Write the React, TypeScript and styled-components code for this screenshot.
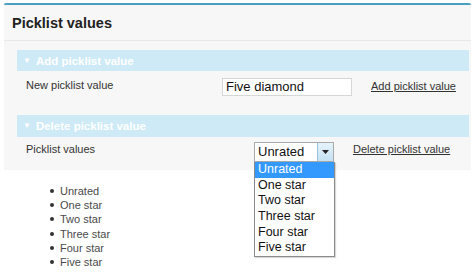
import React from "react";
import styled, { createGlobalStyle } from "styled-components";

const Global = createGlobalStyle`
  html, body {
    margin: 0;
    padding: 0;
    background: #fff;
    font-family: "Liberation Sans", Arial, sans-serif;
    color: #3a3a3a;
  }
`;

const Page = styled.div`
  width: 474px;
  height: 275px;
  padding: 3px 3px 0 4px;
  box-sizing: border-box;
  overflow: hidden;
`;

const Panel = styled.div`
  background: #f7f7f7;
  border-top: 2px solid #4a9fc0;
  border-radius: 2px 2px 0 0;
  height: 167px;
  box-sizing: border-box;
  padding-bottom: 1px;
`;

const Header = styled.div`
  height: 36px;
  display: flex;
  align-items: center;
  padding-left: 8px;
  font-size: 14.5px;
  font-weight: bold;
  color: #222;
  border-bottom: 1px solid #e8e8e8;
  box-sizing: border-box;
`;

const Body = styled.div`
  padding: 9px 2px 0 13px;
`;

const SectionBar = styled.div<{ $h: number }>`
  height: ${(p) => p.$h}px;
  background: #cdeaf6;
  display: flex;
  align-items: center;
  padding-left: 6px;
  gap: 5px;
  color: #fff;
  font-size: 11.5px;
  font-weight: bold;
`;

const Arrow = styled.span`
  font-size: 8px;
  line-height: 1;
`;

const Row = styled.div<{ $h: number }>`
  height: ${(p) => p.$h}px;
  display: flex;
  align-items: flex-start;
  padding-left: 9px;
  font-size: 11px;
  color: #333;
`;

const Label = styled.div<{ $w: number; $top: number }>`
  width: ${(p) => p.$w}px;
  margin-top: ${(p) => p.$top}px;
`;

const TextInput = styled.div`
  width: 130px;
  height: 18px;
  margin-top: 7px;
  background: #fff;
  border: 1px solid #d6d6d6;
  box-sizing: border-box;
  font-size: 13px;
  color: #111;
  padding-left: 3px;
  line-height: 16px;
`;

const LinkText = styled.span<{ $left: number; $top: number }>`
  margin-left: ${(p) => p.$left}px;
  margin-top: ${(p) => p.$top}px;
  text-decoration: underline;
  color: #333;
`;

const SelectWrap = styled.div`
  position: relative;
  margin-top: 5px;
`;

const SelectBox = styled.div`
  width: 80px;
  height: 20px;
  background: #fff;
  border: 1px solid #a9a9a9;
  box-sizing: border-box;
  display: flex;
  font-size: 13px;
  color: #111;
`;

const SelectValue = styled.div`
  flex: 1;
  padding-left: 3px;
  line-height: 18px;
`;

const SelectButton = styled.div`
  width: 15px;
  background: linear-gradient(#e6f3fb, #c4e1f3);
  border-left: 1px solid #9dc3dc;
  display: flex;
  align-items: center;
  justify-content: center;
`;

const List = styled.div`
  position: absolute;
  top: 20px;
  left: 0;
  width: 81px;
  background: #fff;
  border: 1px solid #8a8a8a;
  border-top: none;
  box-sizing: border-box;
  box-shadow: 1px 1px 1px rgba(0, 0, 0, 0.15);
  z-index: 2;
`;

const Option = styled.div<{ $active?: boolean }>`
  height: 15.7px;
  line-height: 15.7px;
  padding-left: 3px;
  font-size: 12.5px;
  background: ${(p) => (p.$active ? "#3399ff" : "#fff")};
  color: ${(p) => (p.$active ? "#fff" : "#111")};
`;

const Bullets = styled.ul`
  margin: 14px 0 0 0;
  padding-left: 56px;
  list-style: none;
  font-size: 11px;
  line-height: 14.2px;
  color: #4a4a4a;
`;

const Item = styled.li`
  position: relative;
  &::before {
    content: "";
    position: absolute;
    left: -10px;
    top: 5px;
    width: 4px;
    height: 4px;
    border-radius: 50%;
    background: #333;
  }
`;

const options = ["Unrated", "One star", "Two star", "Three star", "Four star", "Five star"];

export default function App() {
  return (
    <Page>
      <Global />
      <Panel>
        <Header>Picklist values</Header>
        <Body>
          <SectionBar $h={21}>
            <Arrow>▼</Arrow>
            Add picklist value
          </SectionBar>
          <Row $h={44}>
            <Label $w={196} $top={8}>New picklist value</Label>
            <TextInput>Five diamond</TextInput>
            <LinkText $left={19} $top={9}>Add picklist value</LinkText>
          </Row>
          <SectionBar $h={22}>
            <Arrow>▼</Arrow>
            Delete picklist value
          </SectionBar>
          <Row $h={35}>
            <Label $w={228} $top={6}>Picklist values</Label>
            <SelectWrap>
              <SelectBox>
                <SelectValue>Unrated</SelectValue>
                <SelectButton>
                  <svg width="7" height="4" viewBox="0 0 7 4">
                    <path d="M0 0h7L3.5 4z" fill="#222" />
                  </svg>
                </SelectButton>
              </SelectBox>
              <List>
                {options.map((o, i) => (
                  <Option key={o} $active={i === 0}>
                    {o}
                  </Option>
                ))}
              </List>
            </SelectWrap>
            <LinkText $left={19} $top={6}>Delete picklist value</LinkText>
          </Row>
        </Body>
      </Panel>
      <Bullets>
        {options.map((o) => (
          <Item key={o}>{o}</Item>
        ))}
      </Bullets>
    </Page>
  );
}
